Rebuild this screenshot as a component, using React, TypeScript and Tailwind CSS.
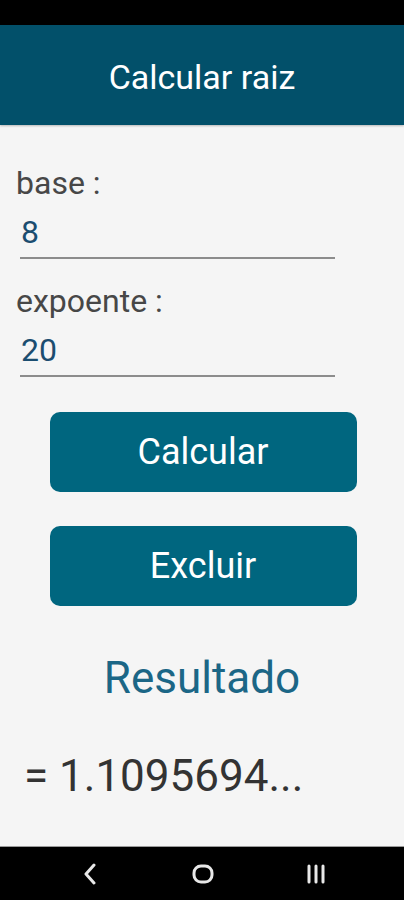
import { useState } from "react";

const Field = ({ label, value }: { label: string; value: string }) => {
    return (
        <div className="flex flex-col">
            <span className="pl-[16px] text-[32px] leading-[36px] text-[#474747]">
                {label}
            </span>
            <div className="mt-[13px] ml-[20px] w-[315px] border-b-2 border-[#8c8c8c] pb-[7px] pl-[1px] text-[32px] leading-[36px] text-[#1b4d70]">
                {value}
            </div>
        </div>
    );
};

const NavBar = () => {
    return (
        <div className="flex h-[54px] items-center border-t border-[#9a9a9a] bg-black pl-[82px]">
            <svg width="16" height="22" viewBox="0 0 16 22" fill="none">
                <path
                    d="M12 2 L4 11 L12 20"
                    stroke="#e8e8e8"
                    strokeWidth="3"
                    strokeLinecap="round"
                    strokeLinejoin="round"
                />
            </svg>
            <svg
                className="ml-[94px]"
                width="22"
                height="20"
                viewBox="0 0 22 20"
                fill="none"
            >
                <rect
                    x="2"
                    y="2"
                    width="18"
                    height="16"
                    rx="7"
                    stroke="#e8e8e8"
                    strokeWidth="3"
                />
            </svg>
            <svg
                className="ml-[91px]"
                width="22"
                height="20"
                viewBox="0 0 22 20"
                fill="none"
            >
                <path
                    d="M4 2 V18 M11 2 V18 M18 2 V18"
                    stroke="#e8e8e8"
                    strokeWidth="3"
                    strokeLinecap="round"
                />
            </svg>
        </div>
    );
};

export default function App() {
    const [base] = useState("8");
    const [expoente] = useState("20");

    return (
        <div
            className="flex h-[900px] w-[404px] flex-col bg-[#f5f5f5]"
            style={{ fontFamily: "Roboto, 'Noto Sans', sans-serif" }}
        >
            <div className="h-[25px] bg-black"></div>
            <div className="flex h-[100px] items-center justify-center bg-[#02506a] pt-[4px] shadow-[0_1px_2px_rgba(0,0,0,0.25)]">
                <h1 className="text-[34px] leading-[40px] text-white">
                    Calcular raiz
                </h1>
            </div>

            <div className="flex flex-1 flex-col pt-[40px]">
                <Field label="base :" value={base} />
                <div className="mt-[24px]">
                    <Field label="expoente :" value={expoente} />
                </div>

                <div className="mt-[35px] flex flex-col items-center gap-[34px] pl-[2px]">
                    <button className="h-[80px] w-[307px] rounded-[10px] bg-[#00667f] text-[36px] leading-[42px] text-white">
                        Calcular
                    </button>
                    <button className="h-[80px] w-[307px] rounded-[10px] bg-[#00667f] text-[36px] leading-[42px] text-white">
                        Excluir
                    </button>
                </div>

                <h2 className="mt-[46px] text-center text-[44px] leading-[52px] text-[#1b6686]">
                    Resultado
                </h2>

                <p className="mt-[47px] pl-[24px] text-[44px] leading-[50px] text-[#333333]">
                    = 1.1095694...
                </p>
            </div>

            <NavBar />
        </div>
    );
}
